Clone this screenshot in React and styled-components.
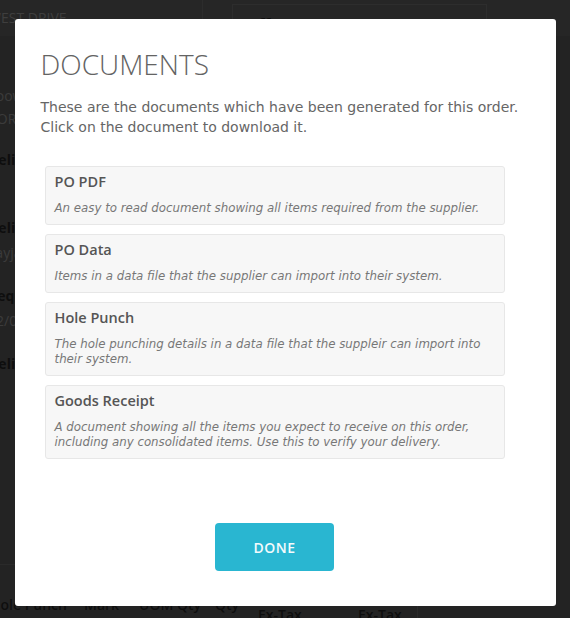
import React from 'react';
import styled, { createGlobalStyle } from 'styled-components';

const GlobalStyle = createGlobalStyle`
  html, body {
    margin: 0;
    padding: 0;
    height: 100%;
  }
  body {
    font-family: 'Open Sans', 'Liberation Sans', sans-serif;
    background: #474747;
    overflow: hidden;
  }
  * {
    box-sizing: border-box;
  }
`;

/* page that sits behind the dialog */
const Page = styled.div`
  height: 100vh;
  margin-left: -12px;
  display: flex;
  flex-direction: column;
  color: #1c1c1c;
  font-size: 14px;
`;

const Header = styled.div`
  height: 36px;
  display: flex;
  background: #4c4c4c;
`;

const AddressCell = styled.div`
  width: 215px;
  padding: 8px 0 0 0;
  border-right: 1px solid #585858;
  color: #7c7c7c;
  font-size: 14px;
`;

const ContactCard = styled.div`
  width: 255px;
  margin: 4px 0 0 29px;
  padding: 8px 12px;
  border: 1px solid #5a5a5a;
  border-bottom: none;
  font-size: 15px;
  font-weight: 700;
`;

const Details = styled.div`
  padding-top: 48px;
  display: flex;
  flex-direction: column;
  gap: 20px;
`;

const Lines = styled.div`
  line-height: 23px;
  color: ${(p) => (p.$muted ? '#767676' : '#1c1c1c')};
  margin-bottom: -2px;
`;

const Field = styled.div`
  line-height: 23px;
`;

const Label = styled.div`
  font-weight: 700;
`;

const Value = styled.div`
  color: #767676;
  margin-top: 2px;
`;

const Table = styled.div`
  margin-top: auto;
  margin-bottom: -27px;
  border-top: 1px solid #545454;
  width: 432px;
  padding-left: 2px;
`;

const HeadRow = styled.div`
  height: 80px;
  display: grid;
  grid-template-columns: 94px 55px 76px 43px 100px 60px;
  align-items: center;
  font-weight: 600;
  line-height: 20px;
`;

const HeadCell = styled.div`
  height: 100%;
  display: flex;
  align-items: center;
  border-right: ${(p) => (p.$last ? '1px solid #545454' : 'none')};
`;

/* dialog */
const Overlay = styled.div`
  position: fixed;
  inset: 0;
  background: rgba(0, 0, 0, 0.5);
  display: flex;
  justify-content: center;
  align-items: flex-start;
  padding-top: 19px;
`;

const Modal = styled.div`
  width: 541px;
  height: 587px;
  background: #fff;
  border-radius: 3px;
  padding: 28px 0 35px 26px;
  display: flex;
  flex-direction: column;
  font-family: 'DejaVu Sans', 'Open Sans', sans-serif;
`;

const Title = styled.h2`
  margin: 0;
  font-family: 'Open Sans', 'Liberation Sans', sans-serif;
  font-size: 28px;
  font-weight: 300;
  line-height: 34px;
  color: #636363;
`;

const Intro = styled.p`
  margin: 16px 0 0;
  font-size: 14px;
  line-height: 20px;
  color: #666;
`;

const DocList = styled.div`
  margin: 29px 0 0 4px;
  width: 460px;
  display: flex;
  flex-direction: column;
  gap: 9px;
`;

const DocCard = styled.div`
  background: #f7f7f7;
  border: 1px solid #e7e7e7;
  border-radius: 3px;
  padding: 5px 9px 8px;
  cursor: pointer;
`;

const DocName = styled.div`
  font-family: 'Open Sans', 'Liberation Sans', sans-serif;
  font-size: 14.5px;
  font-weight: 600;
  line-height: 20px;
  color: #555;
`;

const DocDesc = styled.div`
  margin-top: 9px;
  font-size: 11.8px;
  font-style: italic;
  line-height: 15px;
  color: #777;
`;

const Footer = styled.div`
  width: 460px;
  margin: auto 0 0 4px;
  display: flex;
  justify-content: center;
`;

const DoneButton = styled.button`
  width: 119px;
  height: 48px;
  border: none;
  border-radius: 4px;
  background: #29b6d1;
  color: #f4fbfd;
  font-family: 'Open Sans', 'Liberation Sans', sans-serif;
  font-size: 14px;
  font-weight: 600;
  letter-spacing: 0.5px;
  cursor: pointer;
`;

const documents = [
  {
    name: 'PO PDF',
    desc: 'An easy to read document showing all items required from the supplier.',
  },
  {
    name: 'PO Data',
    desc: 'Items in a data file that the supplier can import into their system.',
  },
  {
    name: 'Hole Punch',
    desc: 'The hole punching details in a data file that the suppleir can import into their system.',
  },
  {
    name: 'Goods Receipt',
    desc: 'A document showing all the items you expect to receive on this order, including any consolidated items. Use this to verify your delivery.',
  },
];

const App = () => {
  return (
    <>
      <GlobalStyle />
      <Page>
        <Header>
          <AddressCell>WEST DRIVE</AddressCell>
          <ContactCard>Jeff Patterson</ContactCard>
        </Header>
        <Details>
          <Lines $muted>
            <div>Toowoomba</div>
            <div>CORAL STREET</div>
          </Lines>
          <Field>
            <Label>Delivery From</Label>
            <Value>&nbsp;</Value>
          </Field>
          <Field>
            <Label>Delivery Email</Label>
            <Value>kayjames@mail.com</Value>
          </Field>
          <Field>
            <Label>Required Before</Label>
            <Value>02/08/2024</Value>
          </Field>
          <Field>
            <Label>Delivery Notes</Label>
          </Field>
        </Details>
        <Table>
          <HeadRow>
            <HeadCell>Hole Punch</HeadCell>
            <HeadCell>Mark</HeadCell>
            <HeadCell>UOM Qty</HeadCell>
            <HeadCell>Qty</HeadCell>
            <HeadCell>
              Price
              <br />
              Ex-Tax
            </HeadCell>
            <HeadCell $last>
              Total
              <br />
              Ex-Tax
            </HeadCell>
          </HeadRow>
        </Table>
      </Page>

      <Overlay>
        <Modal>
          <Title>DOCUMENTS</Title>
          <Intro>
            These are the documents which have been generated for this order.
            <br />
            Click on the document to download it.
          </Intro>
          <DocList>
            {documents.map((doc) => (
              <DocCard key={doc.name}>
                <DocName>{doc.name}</DocName>
                <DocDesc>{doc.desc}</DocDesc>
              </DocCard>
            ))}
          </DocList>
          <Footer>
            <DoneButton>DONE</DoneButton>
          </Footer>
        </Modal>
      </Overlay>
    </>
  );
};

export default App;
